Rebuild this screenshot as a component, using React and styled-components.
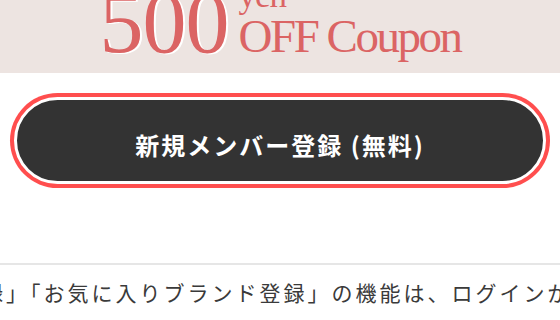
import React from "react";
import styled, { createGlobalStyle } from "styled-components";

const Global = createGlobalStyle`
  html, body { margin: 0; padding: 0; background: #fff; }
  body { overflow: hidden; width: 560px; height: 320px; }
`;

const Page = styled.div`
  width: 560px;
  height: 320px;
  overflow: hidden;
  display: flex;
  flex-direction: column;
`;

const Banner = styled.div`
  height: 73px;
  flex: none;
  background: #ede4e1;
  overflow: hidden;
  display: flex;
  flex-direction: column;
  justify-content: flex-end;
  padding-bottom: 6px;
  box-sizing: border-box;
`;

const HeadRow = styled.div`
  font-family: "Liberation Serif", "Times New Roman", serif;
  font-size: 88px;
  line-height: 88px;
  text-align: center;
  white-space: nowrap;
  color: #db6464;
`;

const Big = styled.span`
  letter-spacing: -1px;
  text-shadow: 2px 1px 0 #fff;
`;

const Stack = styled.span`
  display: inline-block;
  text-align: left;
  margin-left: 10px;
`;

const Yen = styled.span`
  display: block;
  font-size: 35px;
  line-height: 26px;
  margin-bottom: 7px;
  letter-spacing: -1px;
`;

const Off = styled.span`
  display: block;
  font-size: 47px;
  line-height: 40px;
  letter-spacing: -2.5px;
`;

const ButtonArea = styled.div`
  padding: 24px 14px 0;
`;

const JoinButton = styled.button`
  width: 100%;
  height: 87px;
  box-sizing: border-box;
  border: 3px solid #fff;
  border-radius: 44px;
  box-shadow: 0 0 0 4px #ff4e4e;
  background: #333;
  color: #fff;
  font-family: "Noto Sans CJK JP", "Noto Sans", sans-serif;
  font-weight: 700;
  font-size: 24px;
  letter-spacing: 2px;
  display: flex;
  align-items: center;
  justify-content: center;
  padding: 8px 0 0;
  cursor: pointer;
`;

const Divider = styled.hr`
  margin: 79px 0 0;
  border: none;
  height: 2px;
  background: #e6e6e6;
  flex: none;
`;

const Notice = styled.p`
  margin: 12px 0 0 -186px;
  font-family: "Noto Sans CJK JP", "Noto Sans", sans-serif;
  font-size: 21px;
  line-height: 30px;
  letter-spacing: 3px;
  color: #3a3a3a;
  white-space: nowrap;
`;

export default function App() {
  return (
    <Page>
      <Global />
      <Banner>
        <HeadRow>
          <Big>500</Big>
          <Stack>
            <Yen>yen</Yen>
            <Off>OFF Coupon</Off>
          </Stack>
        </HeadRow>
      </Banner>
      <ButtonArea>
        <JoinButton>新規メンバー登録 (無料)</JoinButton>
      </ButtonArea>
      <Divider />
      <Notice>「お気に入り登録」「お気に入りブランド登録」の機能は、ログインが必要です。</Notice>
    </Page>
  );
}
